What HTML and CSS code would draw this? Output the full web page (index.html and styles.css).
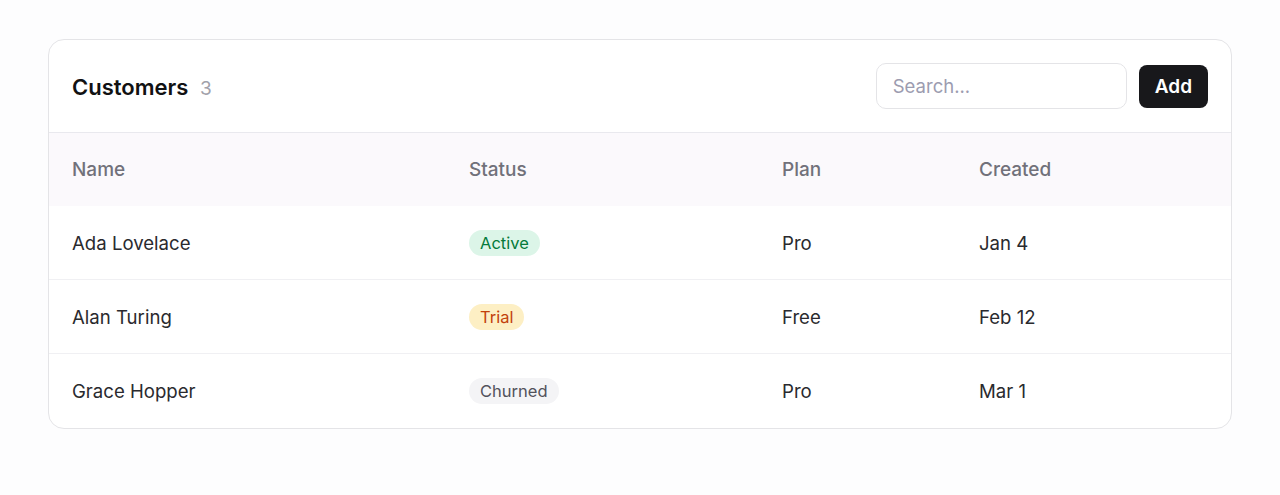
FILE: index.html
```html
<!DOCTYPE html>
<html lang="en">
<head>
<meta charset="utf-8">
<title>Customers</title>
<link rel="stylesheet" href="styles.css">
</head>
<body>
<div class="page">
  <section class="card">
    <header class="card-head">
      <h1 class="title">Customers <span class="count">3</span></h1>
      <div class="actions">
        <input class="search" type="text" placeholder="Search...">
        <button class="btn">Add</button>
      </div>
    </header>
    <div class="table">
      <div class="row head">
        <div>Name</div><div>Status</div><div>Plan</div><div>Created</div>
      </div>
      <div class="row">
        <div>Ada Lovelace</div><div><span class="badge active">Active</span></div><div>Pro</div><div>Jan 4</div>
      </div>
      <div class="row">
        <div>Alan Turing</div><div><span class="badge trial">Trial</span></div><div>Free</div><div>Feb 12</div>
      </div>
      <div class="row">
        <div>Grace Hopper</div><div><span class="badge churned">Churned</span></div><div>Pro</div><div>Mar 1</div>
      </div>
    </div>
  </section>
</div>
</body>
</html>
```
FILE: styles.css
```css
* { box-sizing: border-box; }
html, body { margin: 0; }
body {
  background: #fdfdfe;
  font-family: Inter, "Noto Sans", sans-serif;
  color: #2a2a2e;
}
.page { padding: 39px 48px; }
.card {
  background: #fff;
  border: 1px solid #e4e4e7;
  border-radius: 16px;
  overflow: hidden;
}
.card-head {
  display: flex;
  align-items: center;
  justify-content: space-between;
  height: 93px;
  padding: 0 23px;
  border-bottom: 1px solid #e9e9ee;
}
.title {
  margin: 0;
  font-size: 22px;
  font-weight: 600;
  color: #111113;
  padding-top: 2px;
}
.count {
  margin-left: 6px;
  font-weight: 400;
  font-size: 19px;
  color: #a1a1aa;
}
.actions { display: flex; align-items: center; gap: 12px; }
.search {
  width: 251px;
  height: 46px;
  border: 1px solid #e4e4e7;
  border-radius: 10px;
  padding: 0 16px;
  font: inherit;
  font-size: 18.5px;
  color: #27272a;
  outline: none;
}
.search::placeholder { color: #9c9cb0; }
.btn {
  height: 43px;
  padding: 0 16px;
  border: 0;
  border-radius: 8px;
  background: #18181b;
  color: #fff;
  font: inherit;
  font-size: 19px;
  font-weight: 600;
}
.row {
  display: grid;
  grid-template-columns: 397px 313px 197px 1fr;
  align-items: center;
  height: 74px;
  padding: 0 23px;
  font-size: 18.6px;
  border-bottom: 1px solid #f0f0f3;
}
.row:last-child { border-bottom: 0; }
.row.head {
  height: 73px;
  background: #fbf9fc;
  color: #71717a;
  font-size: 19px;
  font-weight: 500;
  border-bottom: 0;
}
.badge {
  display: inline-block;
  padding: 3px 11px;
  border-radius: 999px;
  font-size: 16.5px;
  line-height: 20px;
}
.active { background: #dcf5e8; color: #047a3a; }
.trial { background: #fdefc4; color: #c2410c; }
.churned { background: #f4f4f6; color: #52525b; }
```
